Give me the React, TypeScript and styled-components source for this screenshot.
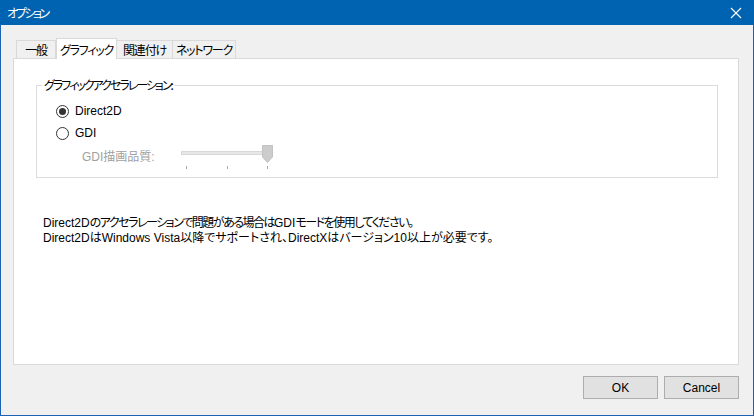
import React from 'react';
import styled, { createGlobalStyle } from 'styled-components';

const GlobalStyle = createGlobalStyle`
  html, body {
    margin: 0;
    padding: 0;
    background: #f0f0f0;
  }
  body {
    font-family: 'Liberation Sans', 'Noto Sans CJK JP', sans-serif;
    font-size: 12px;
    font-feature-settings: 'palt';
    color: #000;
  }
`;

const tabs = ['一般', 'グラフィック', '関連付け', 'ネットワーク'];
const tabWidths = [40, 61, 56, 63];
const ticks = [0, 1, 2];

function App() {
  return (
    <>
      <GlobalStyle />
      <Window>
        <TitleBar>
          <Title>オプション</Title>
          <CloseButton>
            <svg width="12" height="12" viewBox="0 0 12 12">
              <path d="M1 1 L11 11 M11 1 L1 11" stroke="#fff" strokeWidth="1.1" />
            </svg>
          </CloseButton>
        </TitleBar>
        <Body>
          <TabStrip>
            {tabs.map((t, i) => (
              <Tab key={t} $active={i === 1} $width={tabWidths[i]}>
                {t}
              </Tab>
            ))}
          </TabStrip>
          <Panel>
            <GroupBox>
              <Legend>グラフィックアクセラレーション:</Legend>
              <RadioRow>
                <Radio $checked />
                <span>Direct2D</span>
              </RadioRow>
              <RadioRow>
                <Radio />
                <span>GDI</span>
              </RadioRow>
              <SliderRow>
                <DisabledLabel>GDI描画品質:</DisabledLabel>
                <Slider>
                  <Track />
                  <Thumb>
                    <svg width="11" height="18" viewBox="0 0 11 18">
                      <path d="M0.5 0.5 H10.5 V12 L5.5 17.5 L0.5 12 Z" fill="#cccccc" stroke="#c2c2c2" />
                    </svg>
                  </Thumb>
                  <TickRow>
                    {ticks.map((t) => (
                      <Tick key={t} />
                    ))}
                  </TickRow>
                </Slider>
              </SliderRow>
            </GroupBox>
            <Description>
              <Line $spacing={-1.5}>
                <Latin>Direct2D</Latin>のアクセラレーションで問題がある場合は<Latin>GDI</Latin>
                モードを使用してください。
              </Line>
              <Line $spacing={0}>
                Direct2DはWindows Vista以降でサポートされ、DirectXはバージョン10以上が必要です。
              </Line>
            </Description>
          </Panel>
          <ButtonBar>
            <Button>OK</Button>
            <Button>Cancel</Button>
          </ButtonBar>
        </Body>
      </Window>
    </>
  );
}

export default App;

const Window = styled.div`
  width: 754px;
  height: 416px;
  box-sizing: border-box;
  display: flex;
  flex-direction: column;
  background: #f0f0f0;
  border: 1px solid #1a62b4;
  border-top: none;
`;

const TitleBar = styled.div`
  height: 25px;
  margin: 0 -1px;
  background: #0063b1;
  display: flex;
  align-items: center;
  justify-content: space-between;
  padding: 0 10px 0 7px;
`;

const Title = styled.div`
  color: #fff;
  font-family: 'Noto Sans CJK JP', sans-serif;
  font-size: 12px;
  letter-spacing: -2.4px;
`;

const CloseButton = styled.div`
  display: flex;
  align-items: center;
  padding-right: 2px;
`;

const Body = styled.div`
  flex: 1;
  display: flex;
  flex-direction: column;
  padding: 13px 14px 0 12px;
`;

const TabStrip = styled.div`
  display: flex;
  align-items: flex-end;
  height: 20px;
  padding-left: 3px;
`;

const Tab = styled.div<{ $active?: boolean; $width: number }>`
  box-sizing: border-box;
  width: ${(p) => p.$width}px;
  height: ${(p) => (p.$active ? 21 : 18)}px;
  margin-bottom: ${(p) => (p.$active ? -1 : 0)}px;
  border: 1px solid #d9d9d9;
  border-bottom: none;
  border-left: ${(p) => (p.$active ? '1px solid #d9d9d9' : 'none')};
  &:first-child {
    border-left: 1px solid #d9d9d9;
  }
  background: ${(p) => (p.$active ? '#fff' : '#f0f0f0')};
  display: flex;
  align-items: center;
  justify-content: center;
  white-space: nowrap;
  font-family: 'Noto Sans CJK JP', sans-serif;
  font-size: 12px;
  letter-spacing: -1.2px;
  position: relative;
  z-index: ${(p) => (p.$active ? 1 : 0)};
`;

const Panel = styled.div`
  height: 307px;
  box-sizing: border-box;
  background: #fff;
  border: 1px solid #d9d9d9;
  padding: 18px 20px 0 22px;
`;

const GroupBox = styled.fieldset`
  margin: 0;
  padding: 7px 0 0 0;
  height: 101px;
  box-sizing: border-box;
  border: 1px solid #dcdcdc;
  display: flex;
  flex-direction: column;
`;

const Legend = styled.legend`
  margin-left: 5px;
  padding: 0 2px;
  font-family: 'Noto Sans CJK JP', sans-serif;
  font-size: 12px;
  line-height: 16px;
  letter-spacing: -2px;
`;

const RadioRow = styled.div`
  display: flex;
  align-items: center;
  gap: 6px;
  height: 22px;
  padding-left: 19px;
`;

const Radio = styled.span<{ $checked?: boolean }>`
  box-sizing: border-box;
  width: 13px;
  height: 13px;
  border-radius: 50%;
  border: 1px solid #333;
  display: flex;
  align-items: center;
  justify-content: center;
  &::after {
    content: '';
    width: 7px;
    height: 7px;
    border-radius: 50%;
    background: ${(p) => (p.$checked ? '#333' : 'transparent')};
  }
`;

const SliderRow = styled.div`
  display: flex;
  align-items: flex-start;
  padding-left: 45px;
  margin-top: 1px;
`;

const DisabledLabel = styled.div`
  width: 99px;
  color: #a0a0a0;
  line-height: 16px;
  padding-top: 4px;
`;

const Slider = styled.div`
  position: relative;
  width: 92px;
  height: 26px;
`;

const Track = styled.div`
  margin-top: 6px;
  height: 4px;
  width: 88px;
  background: #e7e7e7;
  border: 1px solid #d8d8d8;
  box-sizing: border-box;
`;

const Thumb = styled.div`
  position: absolute;
  left: 81px;
  top: 0;
  line-height: 0;
`;

const TickRow = styled.div`
  display: flex;
  justify-content: space-between;
  width: 82px;
  margin: 11px 0 0 5px;
`;

const Tick = styled.span`
  width: 1px;
  height: 3px;
  background: #a8a8a8;
`;

const Description = styled.div`
  margin: 38px 0 0 7px;
  font-size: 12px;
  line-height: 15px;
`;

const Line = styled.p<{ $spacing: number }>`
  margin: 0;
  white-space: nowrap;
  letter-spacing: ${(p) => p.$spacing}px;
`;

const Latin = styled.span`
  letter-spacing: 0;
`;

const ButtonBar = styled.div`
  flex: 1;
  display: flex;
  justify-content: flex-end;
  align-items: flex-start;
  gap: 6px;
  padding-top: 11px;
`;

const Button = styled.button`
  width: 75px;
  height: 23px;
  box-sizing: border-box;
  background: #e1e1e1;
  border: 1px solid #adadad;
  font-family: 'Liberation Sans', 'Noto Sans CJK JP', sans-serif;
  font-size: 12px;
  color: #000;
  padding: 0;
`;
